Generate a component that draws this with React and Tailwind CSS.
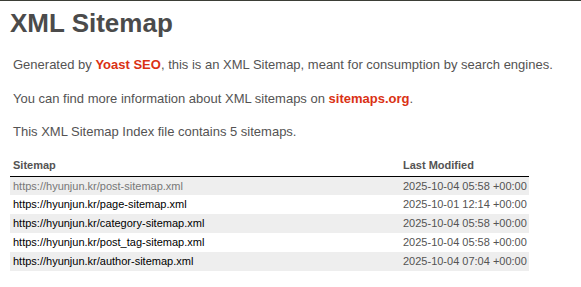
import React from 'react';

const sitemaps = [
  { url: 'https://hyunjun.kr/post-sitemap.xml', mod: '2025-10-04 05:58 +00:00', visited: true },
  { url: 'https://hyunjun.kr/page-sitemap.xml', mod: '2025-10-01 12:14 +00:00' },
  { url: 'https://hyunjun.kr/category-sitemap.xml', mod: '2025-10-04 05:58 +00:00' },
  { url: 'https://hyunjun.kr/post_tag-sitemap.xml', mod: '2025-10-04 05:58 +00:00' },
  { url: 'https://hyunjun.kr/author-sitemap.xml', mod: '2025-10-04 07:04 +00:00' },
];

export default function App() {
  return (
    <div
      className="min-h-[287px] w-[581px] bg-white border-t border-[#3b3e36] text-[13px] text-[#545353]"
      style={{ fontFamily: '"Liberation Sans", Arial, Helvetica, sans-serif' }}
    >
      <div className="px-[10px] pt-[7px]">
        <h1 className="text-[26px] font-bold leading-[31px] text-[#4b4b4b]">XML Sitemap</h1>

        <p className="mx-[3px] mt-[18px] leading-[15.6px]">
          Generated by <a className="font-bold text-[#da3114]">Yoast SEO</a>, this is an XML Sitemap, meant for consumption by search engines.
        </p>
        <p className="mx-[3px] mt-[18px] leading-[15.6px]">
          You can find more information about XML sitemaps on <a className="font-bold text-[#da3114]">sitemaps.org</a>.
        </p>
        <p className="mx-[3px] mt-[18px] leading-[15.6px]">
          This XML Sitemap Index file contains 5 sitemaps.
        </p>

        <table className="mt-[16px] w-[519px] table-fixed border-collapse">
          <thead>
            <tr>
              <th className="w-[390px] border-b border-black px-[3px] pt-[3px] pb-[4px] text-left text-[11px] leading-[13px] font-bold text-[#545353]">
                Sitemap
              </th>
              <th className="border-b border-black px-[3px] pt-[3px] pb-[4px] text-left text-[11px] leading-[13px] font-bold text-[#545353]">
                Last Modified
              </th>
            </tr>
          </thead>
          <tbody>
            {sitemaps.map((s, i) => (
              <tr key={s.url} className={i % 2 === 0 ? 'bg-[#eeeeee]' : 'bg-white'}>
                <td className="h-[19px] px-[3px] text-[11px] leading-[13px] whitespace-nowrap">
                  <a className={s.visited ? 'text-[#777777]' : 'text-black'}>{s.url}</a>
                </td>
                <td className="h-[19px] px-[3px] text-[11px] leading-[13px] whitespace-nowrap text-[#545353]">{s.mod}</td>
              </tr>
            ))}
          </tbody>
        </table>
      </div>
    </div>
  );
}
